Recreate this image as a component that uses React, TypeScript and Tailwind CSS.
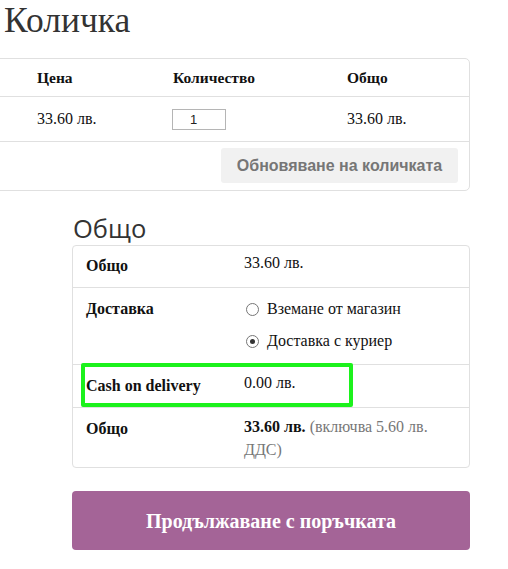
import React from "react";

const serif = { fontFamily: '"Liberation Serif", "Times New Roman", serif' };

function Radio({ checked }: { checked?: boolean }) {
  return (
    <span className="inline-flex items-center justify-center w-[13px] h-[13px] rounded-full border border-[#767676] bg-white mr-[8px]">
      {checked ? <span className="w-[5px] h-[5px] rounded-full bg-[#333]" /> : null}
    </span>
  );
}

export default function App() {
  return (
    <div className="relative w-[508px] h-[569px] overflow-hidden bg-white text-[#111]" style={serif}>
      <h1 className="pl-[4px] text-[35.5px] leading-[40px] text-[#333]" style={serif}>Количка</h1>

      {/* cart table */}
      <div className="mt-[18px] ml-[-20px] w-[490px] border border-[#e0e0e0] rounded-[5px] text-[16px]">
        <div className="flex h-[37px] items-center font-bold text-[15.5px] pt-[1px]">
          <div className="w-[56px]" />
          <div className="w-[136px]">Цена</div>
          <div className="w-[174px]">Количество</div>
          <div>Общо</div>
        </div>
        <div className="flex h-[45px] items-center border-t border-[#e0e0e0]">
          <div className="w-[56px]" />
          <div className="w-[136px]">33.60 лв.</div>
          <div className="w-[174px]">
            <div
              className="ml-[-1px] w-[54px] h-[21px] border border-[#b5b5b5] pl-[17px] text-[13px] leading-[19px] text-[#222]"
              style={{ fontFamily: '"Liberation Sans", Arial, sans-serif' }}
            >
              1
            </div>
          </div>
          <div>33.60 лв.</div>
        </div>
        <div className="flex h-[49px] border-t border-[#e0e0e0] justify-end pr-[11px] pt-[6px]">
          <div
            className="w-[237px] h-[35px] rounded-[3px] bg-[#f1f1f1] flex items-center justify-center text-[16px] font-bold text-[#767676]"
            style={{ fontFamily: '"Liberation Sans", Arial, sans-serif' }}
          >
            Обновяване на количката
          </div>
        </div>
      </div>

      {/* totals */}
      <div className="ml-[72px] w-[398px]">
        <h2
          className="mt-[21px] text-[25.5px] leading-[32px] text-[#333] pl-[1px]"
          style={{ fontFamily: '"Open Sans", sans-serif' }}
        >
          Общо
        </h2>
        <div className="relative mt-[1px] border border-[#e0e0e0] rounded-[4px] text-[16px] leading-[24px]">
          <div className="flex h-[41px]">
            <div className="w-[171px] pl-[13px] pt-[8px] font-bold">Общо</div>
            <div className="pt-[5px]">33.60 лв.</div>
          </div>
          <div className="flex h-[77px] border-t border-[#e0e0e0]">
            <div className="w-[171px] pl-[13px] pt-[9px] font-bold">Доставка</div>
            <div className="pt-[9px] ml-[2px]">
              <div className="flex items-center h-[24px]">
                <Radio />
                <span>Вземане от магазин</span>
              </div>
              <div className="flex items-center h-[24px] mt-[8px]">
                <Radio checked />
                <span>Доставка с куриер</span>
              </div>
            </div>
          </div>
          <div className="flex h-[43px] border-t border-[#e0e0e0]">
            <div className="w-[171px] pl-[13px] pt-[9px] font-bold">Cash on delivery</div>
            <div className="pt-[6px]">0.00 лв.</div>
          </div>
          <div className="flex h-[60px] border-t border-[#e0e0e0]">
            <div className="w-[171px] pl-[13px] pt-[9px] font-bold">Общо</div>
            <div className="pt-[7px] leading-[23px]">
              <div>
                <span className="font-bold">33.60 лв.</span>{" "}
                <span className="text-[#777]">(включва 5.60 лв.</span>
              </div>
              <div className="text-[#777]">ДДС)</div>
            </div>
          </div>
          <div className="absolute left-[8px] top-[117px] w-[272px] h-[44px] border-[4px] border-[#1cf21c] rounded-[2px]" />
        </div>
        <div className="mt-[23px] h-[59px] rounded-[4px] bg-[#a46497] flex items-center justify-center text-white font-bold text-[20px]">
          Продължаване с поръчката
        </div>
      </div>
    </div>
  );
}
